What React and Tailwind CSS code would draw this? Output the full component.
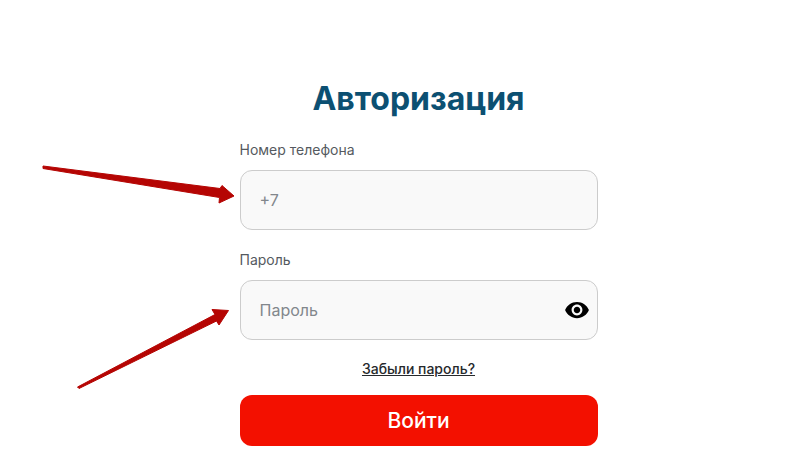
function EyeIcon() {
  return (
    <svg width="26" height="26" viewBox="0 0 24 24" fill="#000">
      <path d="M12 4.5C7 4.5 2.73 7.61 1 12c1.73 4.39 6 7.5 11 7.5s9.27-3.11 11-7.5c-1.73-4.39-6-7.5-11-7.5zM12 17c-2.76 0-5-2.24-5-5s2.24-5 5-5 5 2.24 5 5-2.24 5-5 5zm0-8c-1.66 0-3 1.34-3 3s1.34 3 3 3 3-1.34 3-3-1.34-3-3-3z" />
    </svg>
  );
}

function Arrows() {
  return (
    <svg className="absolute left-0 top-0 pointer-events-none" width="800" height="462" viewBox="0 0 800 462">
      <polygon points="43,166 220,188.5 222,185.5 234,196 219,203 219.5,197.5 43,168.5" fill="#b50503" stroke="#b50503" strokeWidth="1" strokeLinejoin="round" />
      <polygon points="77.5,387 215,314.5 212,309.5 228.5,310.5 219,325 216.5,321 79,388.5" fill="#b50503" stroke="#b50503" strokeWidth="1" strokeLinejoin="round" />
    </svg>
  );
}

function Field({ label, placeholder, children }) {
  return (
    <div>
      <div className="text-[14px] leading-[20px] text-[#555a60]">{label}</div>
      <div className="mt-[10px] h-[60px] rounded-[12px] border border-[#cccccc] bg-[#f9f9f9] pl-[19px] pr-[7px] flex items-center justify-between">
        <span className="text-[16px] text-[#82878c]">{placeholder}</span>
        {children}
      </div>
    </div>
  );
}

export default function App() {
  return (
    <div className="relative w-[800px] h-[462px] bg-white overflow-hidden font-['Inter',sans-serif]">
      <div className="w-[358px] ml-[239.5px] pt-[79px]">
        <h1 className="text-[32px] leading-[40px] font-bold text-[#0c5072] text-center">Авторизация</h1>
        <div className="mt-[21px]">
          <Field label="Номер телефона" placeholder="+7" />
        </div>
        <div className="mt-[20px]">
          <Field label="Пароль" placeholder="Пароль">
            <EyeIcon />
          </Field>
        </div>
        <div className="mt-[18px] text-center leading-[20px]">
          <span className="text-[14px] font-medium text-[#26292c] underline">Забыли пароль?</span>
        </div>
        <button className="mt-[16px] w-full h-[51px] rounded-[12px] bg-[#f31000] text-white text-[21px] font-medium">
          Войти
        </button>
      </div>
      <Arrows />
    </div>
  );
}
